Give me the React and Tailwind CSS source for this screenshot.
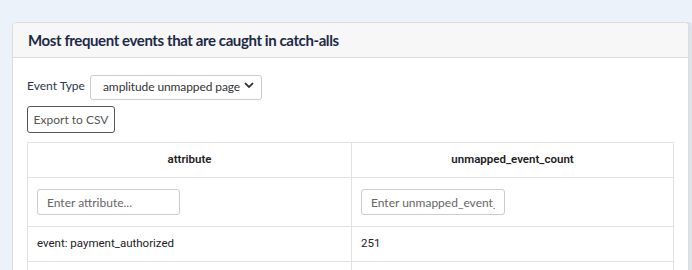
import { useState } from "react";

const rows = [{ attribute: "event: payment_authorized", count: 251 }];

export default function App() {
  const [eventType, setEventType] = useState("amplitude unmapped page");

  return (
    <div className="min-h-screen bg-[#ebf2fa] pt-[22px] pl-[12px] overflow-hidden">
      <div className="w-[677px] bg-white border border-[#dcdcdc] rounded-[4px] shadow-[3px_0_0_#dde3ea]">
        {/* Header */}
        <div className="h-[35px] bg-[#f7f7f7] border-b border-[#dcdcdc] rounded-t-[4px] flex items-center px-[15px]">
          <h2 className="text-[15px] font-bold tracking-[-0.4px] text-[#1c2a48] font-['Lato',sans-serif]">
            Most frequent events that are caught in catch-alls
          </h2>
        </div>

        <div className="px-[14px] pt-[15px] font-['Lato',sans-serif]">
          <div className="flex items-center">
            <label className="w-[63px] text-[12px] text-[#2a3550]">Event Type</label>
            <div className="relative w-[172px] h-[25px]">
              <select
                value={eventType}
                onChange={(e) => setEventType(e.target.value)}
                className="appearance-none w-full h-full border border-[#ccc] rounded-[3px] bg-white pl-[12px] pr-[8px] text-[12px] tracking-[-0.1px] text-[#333] font-['Lato',sans-serif]"
              >
                <option>amplitude unmapped page</option>
                <option>amplitude unmapped track</option>
              </select>
              <svg
                className="absolute right-[8px] top-[9px] pointer-events-none"
                width="10"
                height="7"
                viewBox="0 0 10 7"
              >
                <path d="M1 1.2 L5 5 L9 1.2" fill="none" stroke="#333" strokeWidth="1.8" />
              </svg>
            </div>
          </div>

          <button className="mt-[8px] h-[27px] w-[88px] border border-[#555] rounded-[3px] text-[12px] text-[#555] bg-white font-['Lato',sans-serif]">
            Export to CSV
          </button>

          {/* Table */}
          <table className="mt-[9px] w-[647px] border-collapse font-['Roboto',sans-serif] text-[11.5px] text-[#222] table-fixed">
            <thead>
              <tr className="h-[35px]">
                <th className="w-[324px] border border-[#e2e2e2] font-semibold text-center">attribute</th>
                <th className="border border-[#e2e2e2] font-semibold text-center">unmapped_event_count</th>
              </tr>
            </thead>
            <tbody>
              <tr className="h-[49px]">
                <td className="border border-[#e2e2e2] px-[9px]">
                  <input
                    placeholder="Enter attribute..."
                    className="w-[143px] h-[26px] border border-[#ccc] rounded-[3px] px-[9px] text-[12px] placeholder:text-[#666] font-['Lato',sans-serif]"
                  />
                </td>
                <td className="border border-[#e2e2e2] px-[9px]">
                  <input
                    placeholder="Enter unmapped_event_count..."
                    className="w-[144px] h-[26px] border border-[#ccc] rounded-[3px] px-[9px] text-[12px] placeholder:text-[#666] font-['Lato',sans-serif]"
                  />
                </td>
              </tr>
              {rows.map((r) => (
                <tr key={r.attribute} className="h-[35px]">
                  <td className="border border-[#e2e2e2] px-[9px]">{r.attribute}</td>
                  <td className="border border-[#e2e2e2] px-[9px]">{r.count}</td>
                </tr>
              ))}
              <tr className="h-[35px]">
                <td className="border border-[#e2e2e2]"></td>
                <td className="border border-[#e2e2e2]"></td>
              </tr>
            </tbody>
          </table>
        </div>
      </div>
    </div>
  );
}
